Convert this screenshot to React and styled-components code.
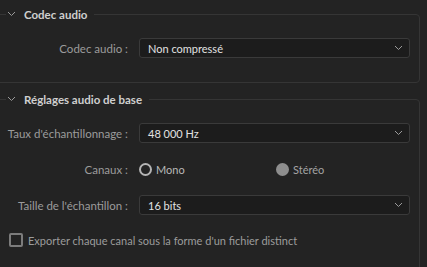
import React from "react";
import styled, { createGlobalStyle } from "styled-components";

const GlobalStyle = createGlobalStyle`
  html, body {
    margin: 0;
    padding: 0;
    background: #232323;
    overflow: hidden;
  }
  body {
    font-family: Lato, "Noto Sans", sans-serif;
    font-size: 11px;
  }
`;

const Chevron = () => (
  <svg width="9" height="6" viewBox="0 0 9 6">
    <path d="M1 1 L4.5 4.5 L8 1" fill="none" stroke="#9a9a9a" strokeWidth="1" />
  </svg>
);

const Section = ({ title, last, children }) => {
  return (
    <Box $last={last}>
      <Legend>
        <ChevronWrap>
          <Chevron />
        </ChevronWrap>
        <Title>{title}</Title>
      </Legend>
      <Body>{children}</Body>
    </Box>
  );
};

const Select = ({ value }) => {
  return (
    <SelectBox>
      <span>{value}</span>
      <Chevron />
    </SelectBox>
  );
};

const Field = ({ label, children }) => {
  return (
    <Row>
      <Label>{label}</Label>
      <Control>{children}</Control>
    </Row>
  );
};

const App = () => {
  return (
    <>
      <GlobalStyle />
      <Page>
        <Section title="Codec audio">
          <Field label="Codec audio :">
            <Select value="Non compressé" />
          </Field>
        </Section>
        <Section title="Réglages audio de base" last>
          <Field label="Taux d'échantillonnage :">
            <Select value="48 000 Hz" />
          </Field>
          <Field label="Canaux :">
            <RadioGroup>
              <Radio>
                <RadioDot />
                <RadioText $on>Mono</RadioText>
              </Radio>
              <Radio>
                <RadioDot $filled />
                <RadioText>Stéréo</RadioText>
              </Radio>
            </RadioGroup>
          </Field>
          <Field label="Taille de l'échantillon :">
            <Select value="16 bits" />
          </Field>
          <CheckRow>
            <CheckBox />
            <CheckText>Exporter chaque canal sous la forme d'un fichier distinct</CheckText>
          </CheckRow>
        </Section>
      </Page>
    </>
  );
};

const Page = styled.div`
  display: flex;
  flex-direction: column;
  gap: 8px;
  height: 100vh;
  overflow: hidden;
  padding-top: 6px;
  box-sizing: border-box;
`;

const Box = styled.fieldset`
  margin: 0 7px 0 -10px;
  padding: 0;
  border: 1px solid #353535;
  border-radius: 4px;
  min-width: 0;
  ${(p) => (p.$last ? "flex: 0 0 220px;" : "")}
`;

const Legend = styled.legend`
  display: flex;
  align-items: center;
  height: 17px;
  margin-left: 15px;
  padding: 0 7px 0 1px;
`;

const ChevronWrap = styled.span`
  display: flex;
  width: 17px;
  margin-top: -2px;
`;

const Title = styled.span`
  color: #cfcfcf;
  font-weight: 700;
  font-size: 11.5px;
`;

const Body = styled.div`
  display: flex;
  flex-direction: column;
  padding: 7px 0 16px 10px;
`;

const Row = styled.div`
  display: grid;
  grid-template-columns: 127px 1fr;
  column-gap: 11px;
  align-items: center;
  height: 36px;
`;

const Label = styled.span`
  color: #9c9c9c;
  font-size: 11.5px;
  text-align: right;
  white-space: nowrap;
`;

const Control = styled.div`
  padding-right: 9px;
`;

const SelectBox = styled.div`
  display: flex;
  align-items: center;
  justify-content: space-between;
  height: 18px;
  padding: 0 6px 0 8px;
  background: #1c1c1c;
  border: 1px solid #3a3a3a;
  border-radius: 3px;
  color: #e2e2e2;
`;

const RadioGroup = styled.div`
  display: flex;
`;

const Radio = styled.label`
  display: flex;
  align-items: center;
  gap: 4px;
  width: 137px;
`;

const RadioDot = styled.span`
  width: 13px;
  height: 13px;
  box-sizing: border-box;
  border-radius: 50%;
  border: 2px solid ${(p) => (p.$filled ? "#8e8e8e" : "#b4b4b4")};
  background: ${(p) => (p.$filled ? "#8e8e8e" : "transparent")};
`;

const RadioText = styled.span`
  color: ${(p) => (p.$on ? "#b8b8b8" : "#a4a4a4")};
`;

const CheckRow = styled.label`
  display: flex;
  align-items: center;
  gap: 5px;
  height: 34px;
  margin-left: 8px;
`;

const CheckBox = styled.span`
  width: 14px;
  height: 14px;
  box-sizing: border-box;
  border: 2px solid #7c7c7c;
  border-radius: 2px;
`;

const CheckText = styled.span`
  color: #9c9c9c;
`;

export default App;
